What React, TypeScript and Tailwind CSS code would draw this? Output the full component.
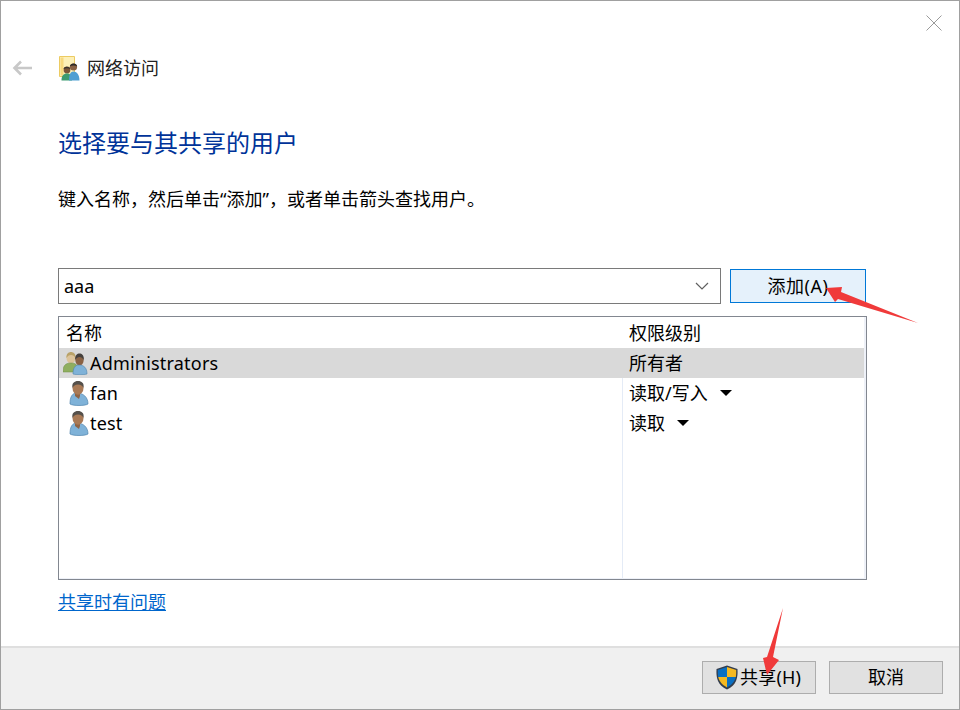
const FONT = "font-['Noto_Sans','Noto_Sans_CJK_SC',sans-serif]";

function FolderUsers() {
  return (
    <svg width="21" height="25" viewBox="0 0 21 25">
      <path d="M.5.500h15v20H.5z" fill="#fdf0b8" stroke="#eccb62" />
      <path d="M1.500 1.500h3v18h-3z" fill="#f8d97e" />
      <circle cx="8" cy="14" r="3.400" fill="#7d5638" />
      <path d="M4.500 13c.5-3 6-3 7 0-2-1-5-1-7 0z" fill="#3a332e" />
      <path d="M2.500 24.500c0-5 2-7 5.500-7s5 2 5 7z" fill="#3d9b70" />
      <circle cx="14.500" cy="11" r="3.600" fill="#8a6244" />
      <path d="M10.800 10.500c.5-4 7-4 7.400 0-2-1.500-5.500-1.500-7.400 0z" fill="#2f2a27" />
      <path d="M10 24.500c0-6 1.500-9 4.500-9s6 3 6 9z" fill="#4f9fd3" />
    </svg>
  );
}

function User() {
  return (
    <svg width="20" height="26" viewBox="0 0 20 26">
      <path d="M1 24c0-7 2-11 7-11 6 0 11 4 11 11-3 2-15 2-18 0z" fill="#7fb2d8" stroke="#4f84ad" strokeWidth=".7" />
      <path d="M6 12h5v4l-1 3-4-3z" fill="#8f6445" />
      <ellipse cx="9" cy="8" rx="5.500" ry="6.800" fill="#a97a56" />
      <path d="M3.500 8C2.500 3 5.500 1 9 1s6.500 2 5.500 7c-1-2-2.500-3.500-5.500-3.500S4.500 6 3.500 8z" fill="#55504b" />
    </svg>
  );
}

function Group() {
  return (
    <svg width="26" height="24" viewBox="0 0 26 24">
      <ellipse cx="8" cy="7" rx="4.500" ry="5.500" fill="#dcc39a" />
      <path d="M3.500 7c-.5-4 2-6 4.500-6s5 2 4.500 6c-1-2-2.500-3-4.500-3s-3.500 1-4.500 3z" fill="#b9a268" />
      <path d="M0 21c0-6 2-9 8-9s7 3 7 9z" fill="#8fae5f" stroke="#6f8d45" strokeWidth=".5" />
      <ellipse cx="16.500" cy="9" rx="4.200" ry="5.500" fill="#8a6244" />
      <path d="M12.300 9c-.6-5 2-6.500 4.200-6.500S21.300 4 20.700 9c-1-2-2.500-3-4.200-3s-3.400 1-4.200 3z" fill="#45403c" />
      <path d="M10 23c0-6 2-9 6-9 5 0 8 3 8 9-3 1-11 1-14 0z" fill="#7fb2d8" stroke="#4f84ad" strokeWidth=".6" />
    </svg>
  );
}

function Shield() {
  return (
    <svg width="22" height="25" viewBox="0 0 22 25">
      <path d="M11 .5 21.500 4c.5 9-1 16-10.500 20.500C1.500 20 0 13 .5 4z" fill="#333d4d" />
      <path d="M11 2 1.800 5c0 3 0 5 .4 7H11z" fill="#0a6fc2" />
      <path d="M11 2l9.200 3c0 3 0 5-.4 7H11z" fill="#f6b921" />
      <path d="M11 12H2.200c1 4 3.500 7.500 8.800 10.500z" fill="#f6b921" />
      <path d="M11 12h8.800c-1 4-3.500 7.500-8.800 10.500z" fill="#0a6fc2" />
    </svg>
  );
}

function Caret() {
  return <span className="ml-3 inline-block h-0 w-0 border-x-[6px] border-t-[6px] border-x-transparent border-t-black" />;
}

function Row({ icon, name, perm, caret, selected }: { icon: React.ReactNode; name: string; perm: string; caret?: boolean; selected?: boolean }) {
  return (
    <div className={`flex h-[30px] items-center ${selected ? "bg-[#d9d9d9]" : ""}`}>
      <div className="flex w-[563px] items-center">
        <div className="flex w-[31px] justify-end pr-[1px]">{icon}</div>
        <span className="text-[18px] leading-[24px] tracking-[0.2px] text-black">{name}</span>
      </div>
      <div className="flex items-center pl-[7px] text-[18px] leading-[24px] text-black">
        {perm}
        {caret && <Caret />}
      </div>
    </div>
  );
}

export default function App() {
  return (
    <div className={`${FONT} relative flex h-[710px] w-[960px] flex-col overflow-hidden border border-[#a0a0a0] bg-white`}>
      <div className="flex h-[645px] flex-col">
        <div className="flex h-[29px] justify-end">
          <svg className="mt-[14px] mr-[17px]" width="16" height="16" viewBox="0 0 16 16">
            <path d="M.5.5l15 15M15.500.5l-15 15" stroke="#9a9a9a" strokeWidth="1" />
          </svg>
        </div>
        <div className="mt-[26px] flex h-[24px] items-center">
          <svg className="ml-[11px]" width="20" height="16" viewBox="0 0 20 16">
            <path d="M20 8H3M9 1.500 2.500 8 9 14.500" fill="none" stroke="#c8c8c8" strokeWidth="2.600" />
          </svg>
          <div className="ml-[27px]"><FolderUsers /></div>
          <span className="ml-[7px] text-[18px] leading-[24px] text-[#222]">网络访问</span>
        </div>
        <div className="mt-[46px] pl-[57px] text-[24px] leading-[34px] text-[#003399]">选择要与其共享的用户</div>
        <div className="mt-[27px] pl-[57px] text-[18px] leading-[24px] text-black">键入名称，然后单击“添加”，或者单击箭头查找用户。</div>
        <div className="mt-[57px] ml-[57px] flex items-center">
          <div className="flex h-[36px] w-[663px] items-center justify-between border border-[#7a7a7a] pr-[11px] pl-[5px] text-[18px] leading-[24px] text-black">
            <span className="-mt-[1px]">aaa</span>
            <svg width="14" height="8" viewBox="0 0 14 8"><path d="M1 1l6 6 6-6" fill="none" stroke="#606060" strokeWidth="1.200" /></svg>
          </div>
          <div className="ml-[9px] flex h-[34px] w-[136px] items-center justify-center border border-[#0078d7] bg-[#e5f1fb] text-[18px] tracking-[0.5px] text-black">添加(A)</div>
        </div>
        <div className="mt-[12px] ml-[57px] h-[264px] w-[809px] border border-[#828790]">
          <div className="flex h-full flex-col border-r-2 border-b border-[#eef1f8]">
            <div className="flex h-[31px] items-center text-[18px] leading-[24px] text-black">
              <div className="w-[563px] pl-[7px]">名称</div>
              <div className="pl-[7px]">权限级别</div>
            </div>
            <div className="relative flex-1">
              <Row selected icon={<Group />} name="Administrators" perm="所有者" />
              <Row icon={<User />} name="fan" perm="读取/写入" caret />
              <Row icon={<User />} name="test" perm="读取" caret />
              <div className="absolute top-[30px] bottom-0 left-[563px] w-px bg-[#e4ebf6]" />
            </div>
          </div>
        </div>
        <a className="mt-[10px] ml-[57px] w-fit text-[18px] leading-[24px] text-[#0066cc] underline">共享时有问题</a>
      </div>
      <div className="flex flex-1 items-start justify-end gap-[13px] border-t-2 border-[#dfdfdf] bg-[#f0f0f0] pt-[13px] pr-[16px]">
        <div className="flex h-[33px] w-[114px] items-center border border-[#adadad] bg-[#e1e1e1] pl-[13px] text-[18px] tracking-[0.2px] text-black">
          <Shield />
          <span className="ml-[2px]">共享(H)</span>
        </div>
        <div className="flex h-[33px] w-[114px] items-center justify-center border border-[#adadad] bg-[#e1e1e1] text-[18px] text-black">取消</div>
      </div>
      <svg className="pointer-events-none absolute top-[-1px] left-[-1px]" width="960" height="710" viewBox="0 0 960 710">
        <path d="M918 323 841 292 842 287 826 288 835 302 838 299z" fill="#f03a3a" />
        <path d="M783 608 773 657 779 660 767 675 763 658 767 657z" fill="#f03a3a" />
      </svg>
    </div>
  );
}
